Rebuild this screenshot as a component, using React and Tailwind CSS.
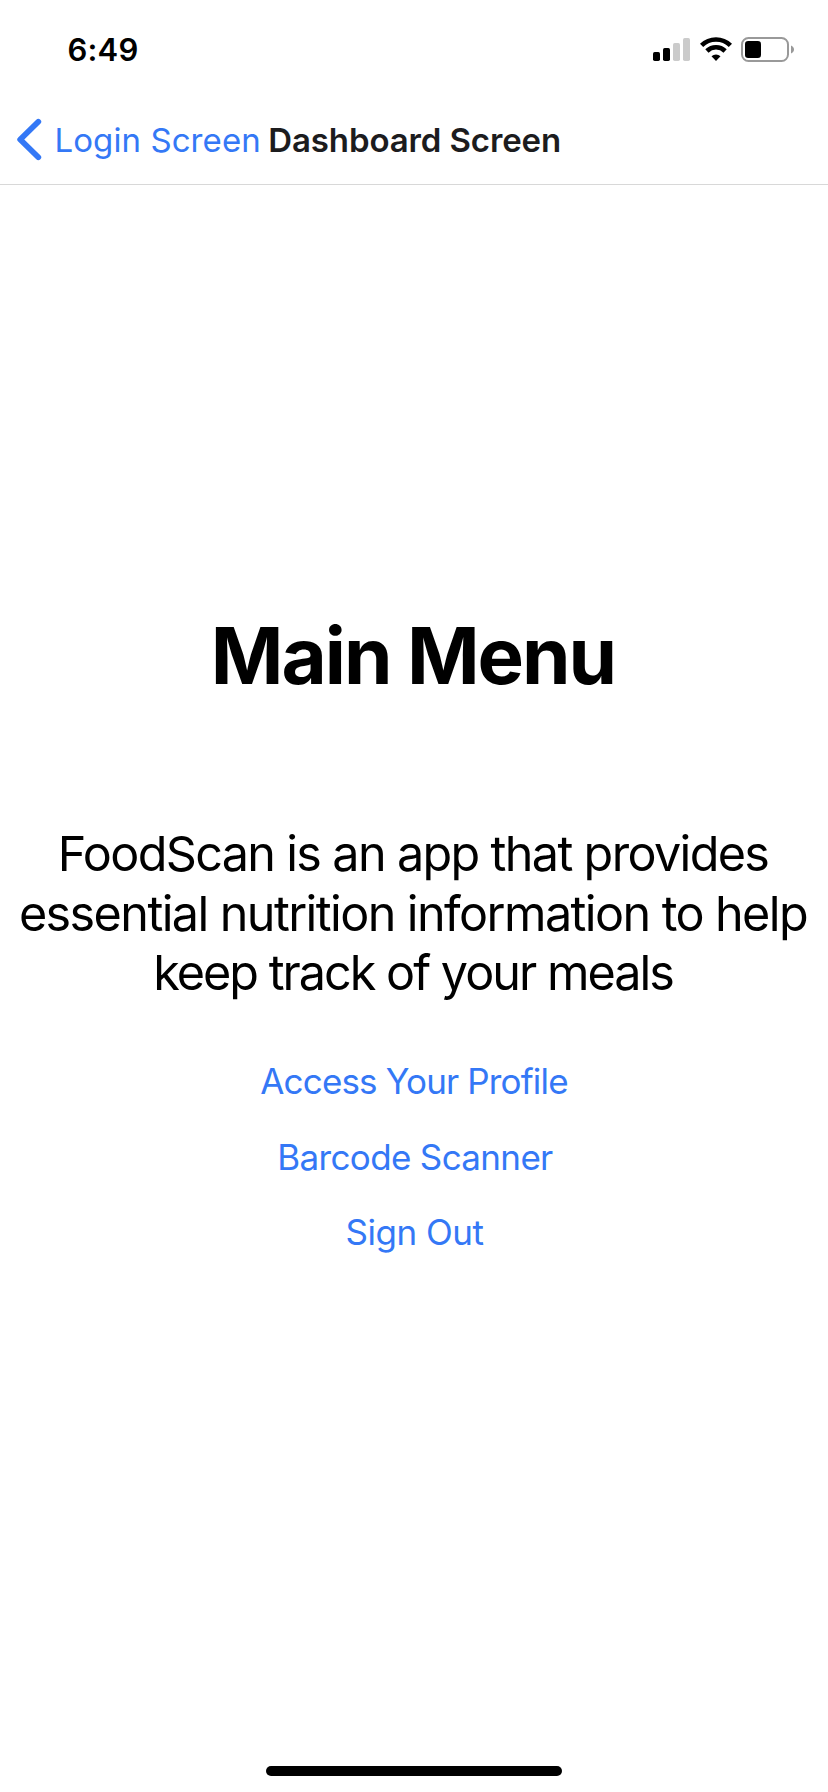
function SignalIcon() {
  return (
    <svg className="h-6 w-[38px]" viewBox="0 0 38 24">
      <rect x="0" y="15" width="7" height="9" rx="1.7" fill="#000" />
      <rect x="10" y="11" width="7" height="13" rx="1.7" fill="#000" />
      <rect x="20" y="6" width="7" height="18" rx="1.7" fill="#cbcbcb" />
      <rect x="30" y="1" width="7" height="23" rx="1.7" fill="#cbcbcb" />
    </svg>
  );
}

function WifiIcon() {
  return (
    <svg className="h-6 w-8" viewBox="0 0 32 24" fill="none" stroke="#000" strokeWidth="4.6">
      <path d="M1.6 8.4 A20.5 20.5 0 0 1 30.4 8.4" />
      <path d="M6.9 14 A13 13 0 0 1 25.1 14" />
      <path d="M16 24 L11.5 19.3 A6.6 6.6 0 0 1 20.5 19.3 Z" fill="#000" stroke="none" />
    </svg>
  );
}

function BatteryIcon() {
  return (
    <svg className="h-[25px] w-[54px]" viewBox="0 0 54 25">
      <rect x="1" y="1" width="46" height="23" rx="6.5" fill="none" stroke="#999" strokeWidth="2" />
      <rect x="4" y="4" width="16" height="17" rx="3.2" fill="#000" />
      <path d="M50 8.5 C54 10 54 15 50 16.5 Z" fill="#999" />
    </svg>
  );
}

function StatusBar() {
  return (
    <header className="flex h-24 items-start justify-between pr-[33px] pl-[67.5px]">
      <time className="mt-[31px] text-[31px] leading-[37px] font-semibold tracking-[0.2px]">6:49</time>
      <div className="mt-[37px] flex items-start">
        <SignalIcon />
        <div className="ml-[9px]"><WifiIcon /></div>
        <div className="ml-[9px]"><BatteryIcon /></div>
      </div>
    </header>
  );
}

function NavBar() {
  return (
    <nav className="flex h-[89px] items-start border-b border-[#d8d8d8] pt-6 pl-4 text-[33px] leading-10 whitespace-nowrap">
      <button className="flex items-start text-[#3478f6]">
        <svg className="-mt-1 h-[46px] w-[28px]" viewBox="0 0 28 46" fill="none" stroke="currentColor" strokeWidth="5.8" strokeLinecap="round" strokeLinejoin="round">
          <path d="M22.3 5.8 L4.2 23.5 L22.3 41.2" />
        </svg>
        <span className="ml-[10.5px] tracking-[0.08px]">Login Screen</span>
      </button>
      <h1 className="ml-[7.5px] font-semibold tracking-[-0.12px] text-[#1c1c1e]">Dashboard Screen</h1>
    </nav>
  );
}

export default function App() {
  return (
    <div className="flex h-[1792px] w-[828px] flex-col bg-white font-['Inter',sans-serif] text-black">
      <StatusBar />
      <NavBar />
      <main className="flex grow flex-col items-center pt-[423px] whitespace-nowrap">
        <h2 className="pr-[2px] text-[78px] leading-[95px] font-bold tracking-[-2.01px]">Main Menu</h2>
        <p className="mt-[121px] flex flex-col items-center text-[48.5px] leading-[59px]">
          <span className="pr-[2px] tracking-[-1.65px]">FoodScan is an app that provides </span>
          <span className="mt-px pr-[2px] tracking-[-1.58px]">essential nutrition information to help </span>
          <span className="pr-[2px] tracking-[-1.98px]">keep track of your meals</span>
        </p>
        <div className="mt-[58px] flex flex-col items-center text-[35px] leading-[42px] text-[#3478f6]">
          <button className="tracking-[-0.84px]">Access Your Profile</button>
          <button className="mt-[34px] pl-[2px] tracking-[-0.66px]">Barcode Scanner</button>
          <button className="mt-[33px] pl-[1px] tracking-[-0.48px]">Sign Out</button>
        </div>
      </main>
      <footer className="flex h-[26px] justify-center">
        <div className="h-[10px] w-[296px] rounded-full bg-black" />
      </footer>
    </div>
  );
}
